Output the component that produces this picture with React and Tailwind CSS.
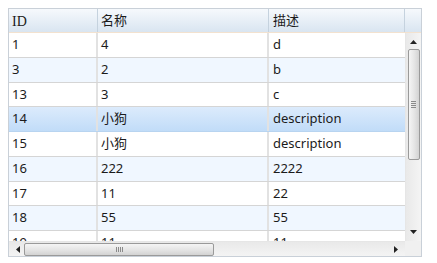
import React from 'react';

const rows = [
    ['1', '4', 'd'],
    ['3', '2', 'b'],
    ['13', '3', 'c'],
    ['14', '小狗', 'description'],
    ['15', '小狗', 'description'],
    ['16', '222', '2222'],
    ['17', '11', '22'],
    ['18', '55', '55'],
    ['19', '11', '11'],
];

const SELECTED = 3;

function Row({ cells, index }) {
    const selected = index === SELECTED;
    const bg = selected
        ? 'bg-gradient-to-b from-[#dcebfc] to-[#c1dcf8] border-b-[#b8d4f0]'
        : index % 2 === 1
            ? 'bg-[#f0f7ff] border-b-[#d5d5d5]'
            : 'bg-white border-b-[#d5d5d5]';
    return (
        <div className={`flex h-[24.75px] shrink-0 border-b ${bg}`}>
            <div className="w-[89px] shrink-0 border-r-2 border-[#e2e2e2] pl-[3px] flex items-center">{cells[0]}</div>
            <div className="w-[171px] shrink-0 border-r-2 border-[#e2e2e2] pl-[3px] flex items-center">{cells[1]}</div>
            <div className="w-[136px] shrink-0 pl-[4px] flex items-center">{cells[2]}</div>
        </div>
    );
}

export default function App() {
    return (
        <div className="p-2 bg-white h-[263px]">
            <div
                className="w-[414px] h-[249px] border border-[#c9d0d8] flex flex-col text-[13px] text-[#1b1b1b] bg-white"
                style={{ fontFamily: '"Noto Sans", "Noto Sans CJK SC", sans-serif' }}
            >
                {/* header */}
                <div className="flex h-[24px] shrink-0 bg-gradient-to-b from-[#f6f9fc] to-[#d9e5f1] border-b border-[#f3e2cf]">
                    <div className="w-[89px] shrink-0 border-r border-[#c5d2de] pl-[3px] pt-[2px] flex items-center text-[14px]" style={{ fontFamily: '"Liberation Serif", "Noto Sans CJK SC", serif' }}>ID</div>
                    <div className="w-[171px] shrink-0 border-r border-[#c5d2de] pl-[3px] pt-[1px] flex items-center">名称</div>
                    <div className="w-[136px] shrink-0 border-r border-[#c5d2de] pl-[4px] pt-[1px] flex items-center">描述</div>
                    <div className="flex-1" />
                </div>

                {/* body */}
                <div className="flex h-[208px] shrink-0">
                    <div className="w-[396px] shrink-0 flex flex-col overflow-hidden">
                        {rows.map((r, i) => <Row key={i} cells={r} index={i} />)}
                    </div>
                    {/* vertical scrollbar */}
                    <div className="flex-1 flex flex-col items-center border-l border-[#e6e6e6] bg-gradient-to-r from-[#e9e9e9] to-[#f4f4f4]">
                        <div className="h-[16px] w-full flex items-center justify-center pt-[1px]">
                            <svg width="7" height="4" viewBox="0 0 7 4"><path d="M0 4 L3.5 0 L7 4 Z" fill="#222" /></svg>
                        </div>
                        <div className="w-[12px] h-[111px] rounded-[2px] border border-[#9a9a9a] bg-gradient-to-r from-[#f5f5f5] via-[#e6e6e6] to-[#d3d3d3] flex items-center justify-center">
                            <div className="flex flex-col gap-[1px]">
                                <div className="w-[5px] h-px bg-[#8a8a8a]" />
                                <div className="w-[5px] h-px bg-[#8a8a8a]" />
                                <div className="w-[5px] h-px bg-[#8a8a8a]" />
                                <div className="w-[5px] h-px bg-[#8a8a8a]" />
                            </div>
                        </div>
                        <div className="flex-1" />
                        <div className="h-[16px] w-full flex items-center justify-center pb-[2px]">
                            <svg width="7" height="4" viewBox="0 0 7 4"><path d="M0 0 L3.5 4 L7 0 Z" fill="#222" /></svg>
                        </div>
                    </div>
                </div>

                {/* horizontal scrollbar */}
                <div className="flex flex-1">
                    <div className="w-[396px] shrink-0 flex items-center border-t border-[#e6e6e6] bg-gradient-to-b from-[#e9e9e9] to-[#f4f4f4]">
                        <div className="w-[15px] h-full flex items-center justify-center pl-[2px]">
                            <svg width="4" height="7" viewBox="0 0 4 7"><path d="M4 0 L0 3.5 L4 7 Z" fill="#222" /></svg>
                        </div>
                        <div className="w-[190px] h-[13px] rounded-[2px] border border-[#9a9a9a] bg-gradient-to-b from-[#f5f5f5] via-[#e6e6e6] to-[#d3d3d3] flex items-center justify-center">
                            <div className="flex gap-[1px]">
                                <div className="w-px h-[5px] bg-[#8a8a8a]" />
                                <div className="w-px h-[5px] bg-[#8a8a8a]" />
                                <div className="w-px h-[5px] bg-[#8a8a8a]" />
                                <div className="w-px h-[5px] bg-[#8a8a8a]" />
                            </div>
                        </div>
                        <div className="flex-1" />
                        <div className="w-[15px] h-full flex items-center justify-center pr-[4px]">
                            <svg width="4" height="7" viewBox="0 0 4 7"><path d="M0 0 L4 3.5 L0 7 Z" fill="#222" /></svg>
                        </div>
                    </div>
                    <div className="flex-1 bg-[#f0f0f0]" />
                </div>
            </div>
        </div>
    );
}
